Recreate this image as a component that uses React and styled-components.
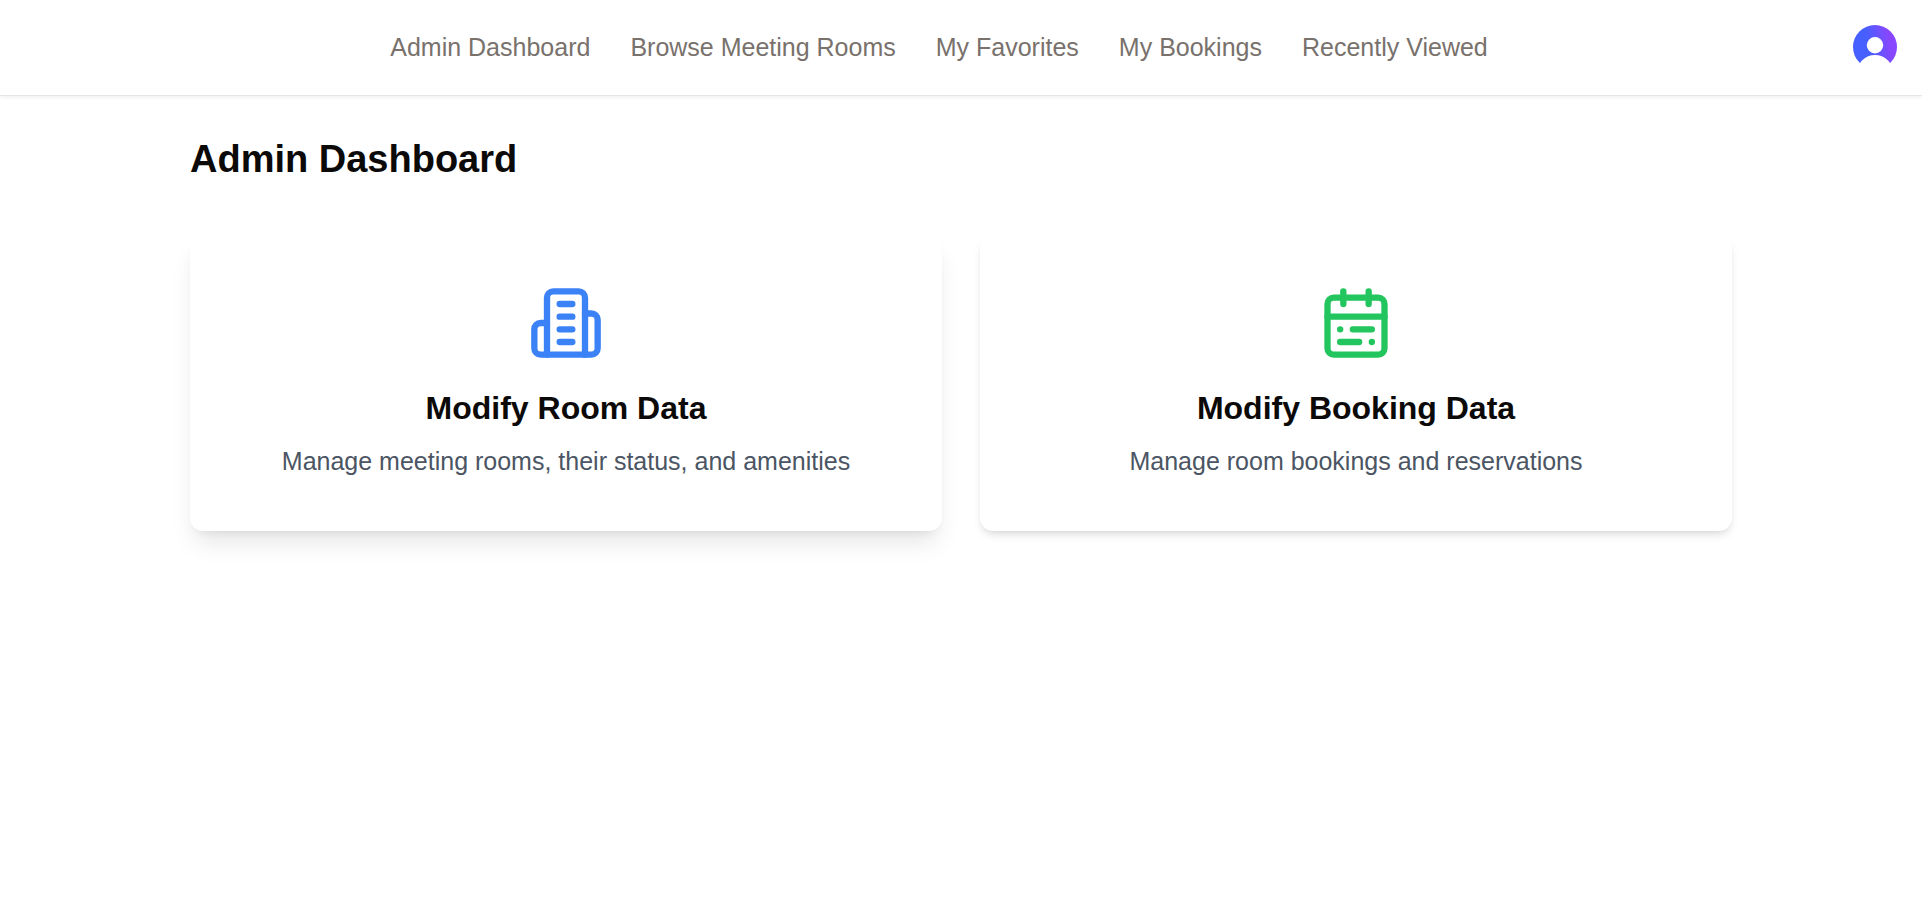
import React from "react";
import styled, { createGlobalStyle } from "styled-components";

const GlobalStyle = createGlobalStyle`
  *, *::before, *::after { box-sizing: border-box; }
  body {
    margin: 0;
    background: #fff;
    color: #0c0a09;
    font-family: "Liberation Sans", Arial, sans-serif;
    font-size: 25px;
    line-height: 37px;
  }
  h1, h2, p { margin: 0; }
  a { color: inherit; text-decoration: none; }
`;

const Header = styled.header`
  display: flex;
  align-items: center;
  padding: 25px 25px 26px;
  background: #fff;
  border-bottom: 1px solid #e5e5e5;
  box-shadow: 0 2px 3px rgba(0, 0, 0, 0.05);
`;

const Nav = styled.nav`
  flex: 1;
  display: flex;
  flex-wrap: wrap;
  justify-content: center;
  gap: 0 40px;
`;

const NavLink = styled.a`
  color: #78716c;
  &:hover { color: #0c0a09; }
`;

const AvatarButton = styled.button`
  display: block;
  padding: 0;
  border: 0;
  border-radius: 50%;
  background: none;
  cursor: pointer;
  svg { display: block; }
`;

const Main = styled.main`
  max-width: 1618px;
  margin: 0 auto;
  padding: 38px;
`;

const PageTitle = styled.h1`
  margin-bottom: 50px;
  font-size: 38px;
  line-height: 51px;
  font-weight: 700;
`;

const CardGrid = styled.div`
  display: grid;
  grid-template-columns: repeat(auto-fit, minmax(min(100%, 560px), 1fr));
  gap: 38px;
`;

const Card = styled.a`
  display: flex;
  flex-direction: column;
  align-items: center;
  padding: 50px 50px 51px;
  border-radius: 13px;
  background: #fff;
  text-align: center;
  box-shadow: ${({ $raised }) =>
    $raised
      ? "0 16px 24px -5px rgba(0,0,0,.1), 0 6px 10px -6px rgba(0,0,0,.1)"
      : "0 6px 10px -2px rgba(0,0,0,.1), 0 3px 6px -3px rgba(0,0,0,.1)"};
`;

const CardIcon = styled.svg`
  width: 76px;
  height: 76px;
  margin-bottom: 25px;
  fill: none;
  stroke: ${({ $color }) => $color};
  stroke-width: 2;
  stroke-linecap: round;
  stroke-linejoin: round;
`;

const CardTitle = styled.h2`
  margin-bottom: 13px;
  font-size: 32px;
  line-height: 44px;
  font-weight: 700;
`;

const CardText = styled.p`
  color: #4b5563;
`;

const links = [
  "Admin Dashboard",
  "Browse Meeting Rooms",
  "My Favorites",
  "My Bookings",
  "Recently Viewed",
];

const cards = [
  {
    title: "Modify Room Data",
    text: "Manage meeting rooms, their status, and amenities",
    color: "#3b82f6",
    raised: true,
    icon: (
      <>
        <path d="M6 22V4a2 2 0 0 1 2-2h8a2 2 0 0 1 2 2v18Z" />
        <path d="M6 12H4a2 2 0 0 0-2 2v6a2 2 0 0 0 2 2h2" />
        <path d="M18 9h2a2 2 0 0 1 2 2v9a2 2 0 0 1-2 2h-2" />
        <path d="M10 6h4M10 10h4M10 14h4M10 18h4" />
      </>
    ),
  },
  {
    title: "Modify Booking Data",
    text: "Manage room bookings and reservations",
    color: "#22c55e",
    raised: false,
    icon: (
      <>
        <rect width="18" height="18" x="3" y="4" rx="2" />
        <path d="M16 2v4M3 10h18M8 2v4M17 14h-6M13 18H7M7 14h.01M17 18h.01" />
      </>
    ),
  },
];

function Avatar() {
  return (
    <svg width="44" height="44" viewBox="0 0 44 44" aria-hidden="true">
      <defs>
        <linearGradient id="avatar-fill" x1="0" y1="0.6" x2="1" y2="0.4">
          <stop offset="0.36" stopColor="#465fff" />
          <stop offset="0.84" stopColor="#8847ff" />
        </linearGradient>
        <clipPath id="avatar-clip">
          <rect width="44" height="38" />
        </clipPath>
      </defs>
      <g clipPath="url(#avatar-clip)">
        <circle cx="22" cy="22" r="22" fill="url(#avatar-fill)" />
        <circle cx="22" cy="20.3" r="8.2" fill="#fff" />
        <circle cx="22" cy="48" r="18" fill="#fff" />
      </g>
    </svg>
  );
}

export default function App() {
  return (
    <>
      <GlobalStyle />
      <Header>
        <Nav aria-label="Main">
          {links.map((label) => (
            <NavLink key={label} href="#">{label}</NavLink>
          ))}
        </Nav>
        <AvatarButton type="button" aria-label="Open user menu">
          <Avatar />
        </AvatarButton>
      </Header>
      <Main>
        <PageTitle>Admin Dashboard</PageTitle>
        <CardGrid>
          {cards.map(({ title, text, color, raised, icon }) => (
            <Card key={title} href="#" $raised={raised}>
              <CardIcon viewBox="0 0 24 24" $color={color} aria-hidden="true">
                {icon}
              </CardIcon>
              <CardTitle>{title}</CardTitle>
              <CardText>{text}</CardText>
            </Card>
          ))}
        </CardGrid>
      </Main>
    </>
  );
}
